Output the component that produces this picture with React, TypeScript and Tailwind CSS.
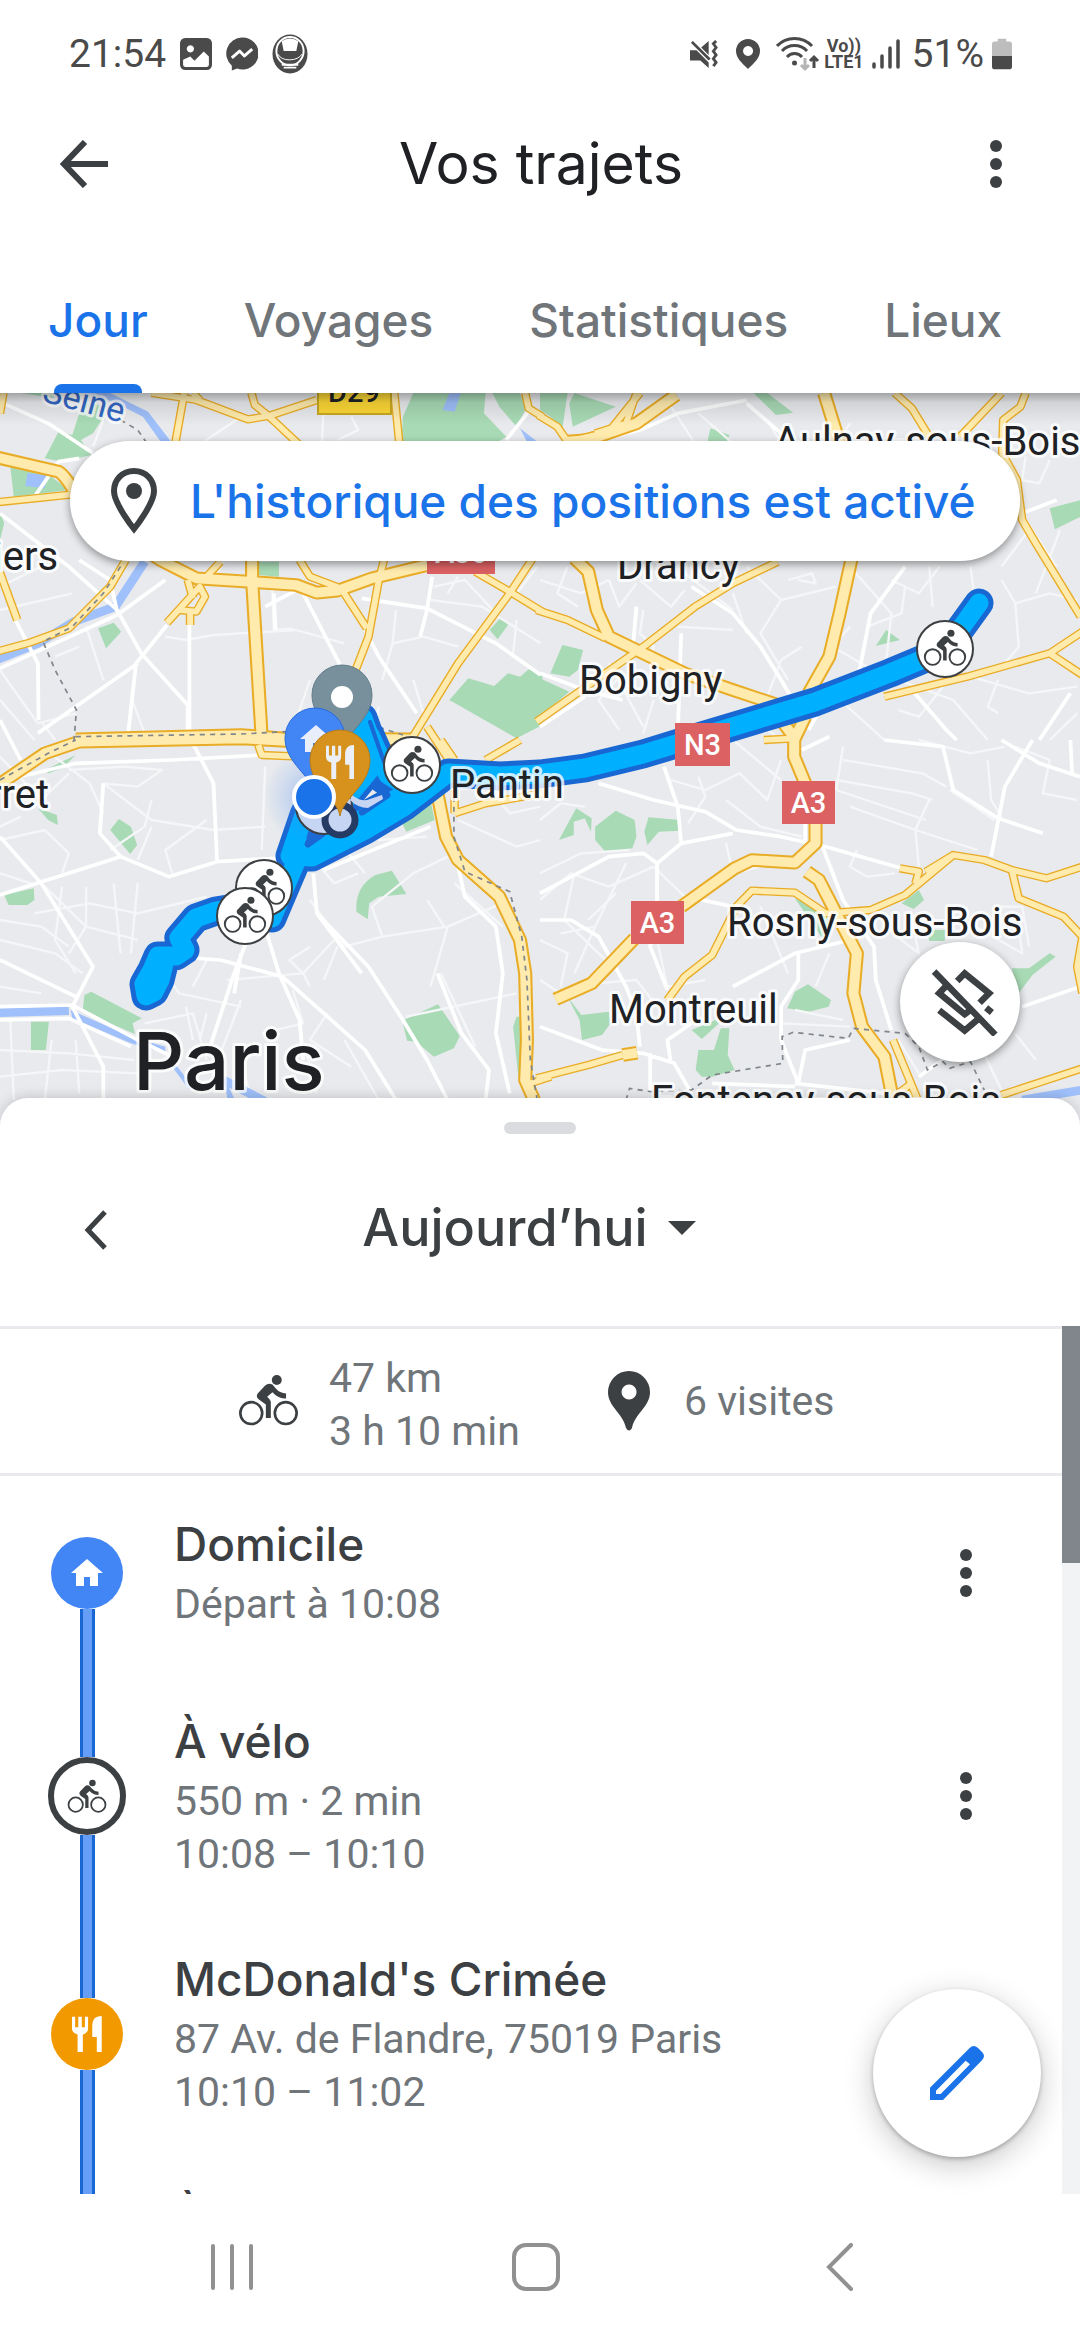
import type { ReactNode, SVGProps } from 'react';
import clsx from 'clsx';

const sans = 'font-[Inter,Roboto,sans-serif]';

interface IconProps {
  className?: string;
  x?: number;
  y?: number;
  width?: number;
  height?: number;
}

/* ---------- Icons ---------- */

function BikeIcon(props: IconProps) {
  return (
    <svg viewBox="232 132 184 160" fill="currentColor" aria-hidden="true" {...props}>
      <circle cx="272" cy="250" r="33" fill="none" stroke="currentColor" strokeWidth="8" />
      <circle cx="376" cy="250" r="33" fill="none" stroke="currentColor" strokeWidth="8" />
      <circle cx="349" cy="150" r="15" />
      <path d="M314 167Q324 157 336 164L346 176Q358 190 377 191V206Q352 206 336 187L320 201L327 208Q331 212 331 218V265H316V224L296 210Q284 201 292 190Z" />
    </svg>
  );
}

function CutleryIcon(props: IconProps) {
  return (
    <svg viewBox="0 0 85 103" fill="currentColor" aria-hidden="true" {...props}>
      <path d="M0 2h9v30h9V2h10v30h9V2h9v34q0 12-15 17v50H16V53Q0 48 0 36ZM58 30C58 10 66 0 85 0v103H71V60H58Z" />
    </svg>
  );
}

function HomeIcon(props: IconProps) {
  return (
    <svg viewBox="0 0 32 27" fill="currentColor" aria-hidden="true" {...props}>
      <path d="M0 14 16 0l16 14h-5v13h-8v-9h-6v9H5V14Z" />
    </svg>
  );
}

function MoreIcon() {
  return (
    <svg viewBox="0 0 12 48" className="h-12 w-3 fill-[#3c4043]" aria-hidden="true">
      <circle cx="6" cy="6" r="6" />
      <circle cx="6" cy="24" r="6" />
      <circle cx="6" cy="42" r="6" />
    </svg>
  );
}

/* ---------- Status bar ---------- */

function StatusBar() {
  return (
    <div className="flex h-27 items-center justify-between pr-[68px] pl-[69px] font-[Roboto,sans-serif] text-[39px] text-[#4a4a4a]">
      <div className="flex items-center gap-[14px]">
        <span>21:54</span>
        <svg viewBox="0 0 31 31" className="h-8 w-8" aria-hidden="true">
          <path
            fillRule="evenodd"
            fill="currentColor"
            d="M5 0h21a5 5 0 0 1 5 5v21a5 5 0 0 1-5 5H5a5 5 0 0 1-5-5V5a5 5 0 0 1 5-5ZM10 7a3.500 3.500 0 1 0 .1 0ZM3 21v5a2 2 0 0 0 2 2h21a2 2 0 0 0 2-2v-8l-5-5-9 9-4-4Z"
          />
        </svg>
        <svg viewBox="0 0 33 34" className="h-9 w-8" aria-hidden="true">
          <path fill="currentColor" d="M16.500 0a16.500 16.500 0 1 1-5 32L6 34v-5A16.500 16.500 0 0 1 16.500 0Z" />
          <path fill="none" stroke="#fff" strokeWidth="3" strokeLinejoin="round" d="m6 21 8-7 5 5 8-7" />
        </svg>
        <svg viewBox="0 0 37 40" className="h-10 w-9" aria-hidden="true">
          <ellipse cx="18.500" cy="20" rx="18" ry="20" fill="currentColor" />
          <ellipse cx="18.500" cy="17" rx="14" ry="14.500" fill="none" stroke="#fff" strokeWidth="2" />
          <path fill="#fff" d="M10 7l2 10h13l2-10a14 14 0 0 0-17 0ZM10 30h17v2H10ZM12 33h13v2H12Z" />
          <path fill="none" stroke="#fff" strokeWidth="1" d="M6 20q3 6 12 6t13-6" />
        </svg>
      </div>
      <div className="flex items-center">
        <svg viewBox="0 0 30 30" className="mr-4 h-7 w-8" aria-hidden="true">
          <path fill="currentColor" d="M0 11h7l13 13v6l-9-8H0Zm12-3 8-7v15Z" />
          <path fill="none" stroke="currentColor" strokeWidth="3" d="m2 2 19 19" />
          <path fill="none" stroke="currentColor" strokeWidth="3" d="m28 1-3 3 3 4-3 4 3 4-3 4 3 4-3 4" />
        </svg>
        <svg viewBox="0 0 24 30" className="mr-4 h-8 w-6" aria-hidden="true">
          <path fillRule="evenodd" fill="currentColor" d="M12 0a12 12 0 0 1 12 12c0 7-6 12-12 18C6 24 0 19 0 12A12 12 0 0 1 12 0Zm0 7a5 5 0 1 0 .1 0Z" />
        </svg>
        <svg viewBox="0 0 44 34" className="mr-1 h-9 w-11" aria-hidden="true">
          <g fill="none" stroke="currentColor" strokeWidth="3">
            <path d="M1 9a24 24 0 0 1 35 0M6 14a17 17 0 0 1 25 0M11 20a10 10 0 0 1 15 0" />
            <path d="M38 31V20m-4 4 4-4 4 4" />
            <path d="M29 21v11m-4-4 4 4 4-4" stroke="#b5b5b5" />
          </g>
          <circle cx="18.500" cy="26" r="2.500" fill="currentColor" />
        </svg>
        <span className="mr-2 flex flex-col items-center text-[18px] leading-4 font-bold">
          <span>Vo))</span>
          <span>LTE1</span>
        </span>
        <svg viewBox="0 0 28 30" className="mr-3 h-8 w-7" aria-hidden="true">
          <path fill="none" stroke="currentColor" strokeWidth="3.500" strokeLinecap="round" d="M2 25v3M10 17v11M18 9v19M26 2v26" />
        </svg>
        <span>51%</span>
        <svg viewBox="0 0 21 32" className="ml-2 h-8 w-5" aria-hidden="true">
          <path fill="#bdbdbd" d="M6 0h9v3h3a3 3 0 0 1 3 3v13H0V6a3 3 0 0 1 3-3h3Z" />
          <path fill="currentColor" d="M0 18h21v11a3 3 0 0 1-3 3H3a3 3 0 0 1-3-3Z" />
        </svg>
      </div>
    </div>
  );
}

/* ---------- Header ---------- */

function Header() {
  return (
    <header className="flex h-28 items-center justify-between pr-[78px] pl-[60px]">
      <button type="button" aria-label="Retour">
        <svg viewBox="0 0 48 48" className="h-12 w-12" aria-hidden="true">
          <path fill="none" stroke="#3c4043" strokeWidth="6" d="M48 24H4M25 2 4 24l21 22" />
        </svg>
      </button>
      <h1 className={clsx(sans, 'mr-4 ml-auto text-[57px] text-[#202124]')}>Vos trajets</h1>
      <button type="button" aria-label="Plus d'options" className="ml-auto">
        <MoreIcon />
      </button>
    </header>
  );
}

const tabs = ['Jour', 'Voyages', 'Statistiques', 'Lieux'];

function Tabs() {
  return (
    <div role="tablist" className={clsx(sans, 'flex h-[173px] overflow-hidden text-[46px] font-medium')}>
      {tabs.map((tab, i) => (
        <button
          key={tab}
          type="button"
          role="tab"
          aria-selected={i === 0}
          className={clsx(
            'flex flex-col items-center justify-between px-12 pt-[70px]',
            i === 0 ? 'text-[#1a73e8]' : 'text-[#70757a]',
          )}
        >
          <span className="leading-[60px]">{tab}</span>
          {i === 0 && <span className="h-[9px] w-[88px] rounded-t-lg bg-[#1a73e8]" />}
        </button>
      ))}
    </div>
  );
}

/* ---------- Map ---------- */

interface Tile {
  x: number;
  y: number;
  green: string;
  water?: string;
  river?: string;
  minor: string;
  street: string;
  road: string;
  highway: string;
  border?: string;
}

const tiles: Tile[] = [
  {
    x: 0,
    y: 0,
    green:
      'M130 235 170 155 210 165 240 70 320 80 270 160 235 180 265 225 180 245ZM30 260 130 275 200 330 40 350ZM60 39H160L200 60ZM1200 39H1410L1405 100 1470 170 1440 190H1165L1170 110ZM1430 39H1510L1525 90 1500 140 1450 80ZM285 745 330 728 352 755 308 805ZM750 545H810V590L750 585ZM0 395 12 430 0 480ZM1305 960 1360 895 1435 918 1475 880 1510 890 1535 868 1575 885V1035L1500 1075ZM1455 712 1475 735 1445 778 1422 750Z',
    water: 'M240 39H320L430 95 500 190H470L415 110 330 65ZM1305 39H1338L1320 95 1285 90ZM80 280 135 285 130 325 73 318ZM1510 145 1560 185H1530Z',
    river: 'M420 545 335 680 215 725 110 790-10 840',
    minor:
      'M460 480 620 530M0 620 120 560M0 690 210 640M250 740 300 900M230 800 160 830M0 870Q40 930 110 1030M110 1030 220 1000M0 960 100 1080M120 1025 160 1080M480 770 540 780 620 765 860 750 1000 790M620 600 650 545M790 620 795 750 850 745M1150 690 1140 790 1230 770 1330 800M1260 620 1350 600 1440 700M1250 660 1400 680 1570 790M1330 590 1300 640M1500 720 1490 820M380 950 420 1060M570 200 700 110 800 120M940 70 935 190M1020 110 1040 150 980 180M900 900 840 1080M1100 980 1080 1080M300 120 270 200M1560 560 1500 640M1230 1000 1200 900M1140 790 1110 900',
    street:
      'M10 70 140 130 270 220M0 400 200 560 340 690 410 820 545 975V1080M45 720 110 850 112 1020M0 865 340 705 480 600M550 730V1080M485 735 395 850 370 1080M400 850 110 1060M880 640 920 720 1000 880M1050 655 1240 685 1440 790 1570 885M1255 590 1240 690 1220 770M1060 750 1100 830 1210 1000M770 680 880 620M795 640 800 750M1470 180 1535 95M100 350 170 245 230 235M340 695 320 600 230 540',
    road: 'M-10 367 240 340M0 578 50 720M365 540 320 620 200 745 80 790-10 815M535 39 508 195M440 39 570 60 720 118 780 108 920 60M730 39 740 75 780 108 870 195M1145 39 1160 195M1525 39 1535 85 1575 110M545 600 560 655M485 728 580 620 595 650 570 695 520 690M552 690V735M600 590 640 545M870 540 900 590 990 625 1065 745M1115 540 1100 600 1070 770 1025 890M1380 575 1480 635 1575 695M1550 530 1480 640 1330 850 1190 1085M1240 1040 1310 1150M10 39 0 100M560 39 580 60',
    highway: 'M-10 232 170 275Q195 290 240 380L465 540 570 595 720 605 860 615 920 638 980 632 1080 595 1240 555M732 540V600L760 1075M220 1078 700 1065 820 1075 1200 1078',
    border: 'M350 120 400 150 440 210M350 560 300 640 210 740 125 785 160 870 222 990 215 1080M220 1070 700 1062 830 1055M1100 1042 1170 1065',
  },
  {
    x: 1568,
    y: 0,
    green:
      'M0 39H80L65 145 30 110 0 90ZM100 39 220 80 95 140 85 70ZM620 39H660L735 98 685 105ZM495 145 550 165 540 190H485ZM1480 385 1570 360V410L1495 448ZM1005 750 1045 780 975 798ZM65 795 125 810 110 870 85 890 30 880ZM0 895 85 935 0 1010Z',
    minor:
      'M380 80 450 190M460 100 560 190M660 120 700 190M900 130 860 190M0 600 120 640 200 600M80 560 50 640 110 680M200 600 230 680 280 610M290 600 380 680 420 630M560 640 600 760M600 560 700 660 640 760 720 900M700 660 860 620M720 600 790 580 800 610 750 600M900 560 1020 700 1000 900M1020 600 1100 640 1160 560M1060 620 1050 700 950 740M1130 560 1140 680M1250 560 1260 640M1340 600 1380 670 1480 640 1560 660M1380 670 1390 800 1350 850M1300 400 1410 420 1500 560M1410 230 1400 300 1450 310 1480 240M1420 450 1340 560M1510 450 1440 640M300 690 290 760 330 800 320 860M200 850 300 1040M330 960 300 1060M240 880 170 960 230 1050M610 1010 700 1080M850 940 1000 1080M900 740 850 800 950 860M400 740 560 750M1040 900 1200 960 1300 1080M1170 920 1100 1010 1040 990M1250 890 1420 940 1560 920M1330 900 1300 980 1330 1000M1560 1000 1480 1080M420 580 560 690M760 800 700 840 660 950',
    street:
      'M130 190 290 150 400 100 600 60M600 70 700 160 760 190M440 620 560 700 640 800 700 900 740 970M1060 560 960 700 930 860 910 930M0 880 130 930 240 960M280 680 270 800M410 760 400 1060M1540 940 1450 1080M1080 930 1180 1050 1210 1080M840 940 780 1050M1500 360 1400 400M0 1040 130 950',
    road: 'M-5 105 50 140 80 185M80 185 200 155 290 39M280 39 250 130 160 160M1030 39 1080 85 1130 170M1340 39 1220 170M1410 39 1395 80 1345 120 1342 220 1385 300 1400 420 1440 490 1570 710M690 545 560 610 450 680 300 800-10 1025M-10 690 80 720 190 775M1000 950 1240 890 1480 820 1575 755M1480 820 1575 885M650 1080 740 1075',
    highway: 'M395 45 280 130 140 180 80 185M825 39 870 190M100 535 140 575 165 690 200 770 330 835 420 880 560 930 720 985M905 535 870 700 840 830 780 940M700 1020 740 1075 770 1010',
  },
  {
    x: 0,
    y: 1080,
    green:
      'M130 90 220 45 180 85 140 100ZM110 205 165 225 168 255 140 240ZM345 237 380 260 398 315 378 342 320 270ZM12 465 98 445 100 480 80 495H25ZM1090 405 1138 392 1180 462 1100 470 1072 490 1068 538 1035 515Q1030 440 1090 405ZM1160 235 1250 180 1262 240 1180 275ZM245 765 265 755 412 835 385 850 392 882 240 815ZM90 845H142L133 930H90ZM1168 842 1272 793 1335 888 1318 925 1260 950 1208 905 1182 902ZM1500 830 1490 860 1505 1010 1520 1030V830Z',
    water: 'M205 810 380 890 480 920 480 940 380 910 210 835ZM500 960 560 1040 550 1050 500 980ZM650 1010 680 1075H660Z',
    river: 'M-10 818 200 812M650 1020 780 1090',
    minor:
      'M0 50 120 180 200 100M120 20 260 130 300 220M200 90 360 80 470 90 400 140 300 130M300 130 440 240 620 270 770 260M0 300 130 270 200 340 180 400M320 330 420 260 440 180M440 260 400 360M500 400 480 330 600 240M770 80 760 330M0 400 90 430M130 440 250 560 400 600M100 520 260 490 400 520 600 470M180 440 160 600 220 700M250 440 250 560 200 640M330 430 350 640M400 430 380 640M0 540 120 560 200 620M0 600 160 640 240 700M0 740 120 760M30 840 40 1080M150 900 130 1080M0 930 200 940 390 960M0 1010 180 990 400 1000M220 900 230 1060M420 850 560 820 600 960M540 800 560 900M600 820 580 900M480 700 520 760 700 800M600 660 560 740M660 720 880 700 840 660 900 620M850 750 880 850 760 880M700 780 640 940M930 380 970 430 1040 400M900 480 1000 620 1110 590M970 600 880 700 900 740M1110 590 1080 500 1200 400 1300 350M1110 590 1300 560 1480 480M1290 560 1240 480M1300 560 1250 740M1320 430 1460 560M1180 830 1500 760M980 620 940 720M1280 700 1380 920M1040 240 1100 300 1240 290M980 300 1060 400M890 940 920 1060M700 960 730 1080M950 820 900 900 1020 980M1000 900 1100 1080M60 230 0 260M1380 100 1480 220 1568 200M1330 240 1500 320 1568 300',
    street:
      'M0 -60 60 60M0 290 120 430 270 680 210 800 300 980 300 1080M0 465 350 350 490 410 630 365 800 355M0 120 100 100 220 70 500 60 850 40M0 660 220 770M0 800 210 795 400 900 520 960M0 840 200 835 380 920M500 650 640 660 820 710M740 540 680 700 610 920M760 530 810 700 870 840 880 960M820 710 1060 930 1150 1080M910 400 920 520 1070 680 1170 840 1240 960 1300 1080M920 520 1050 700M1270 700 1340 880 1420 990 1410 1080M940 390 1250 260M1330 380 1350 470 1440 560 1460 700 1440 880 1480 1060M560 10 620 130 630 360M300 130 290 280 350 350M700 640 680 760',
    road: 'M750 15 760 45 870 50M1320 220 1410 190 1575 160M1320 150V220M1280 0 1320 60M1410 60 1510 0M1540 1030 1600 1010',
    highway:
      'M-5 135 130 40 230 5 700-5 870 5M1268 150 1295 290 1330 360 1450 470 1510 600 1525 700 1530 900 1525 1020 1555 1090',
    border: 'M0 120 140 40 220 0M1318 80V290L1350 395 1480 455 1515 590 1530 720 1540 960 1560 1080',
  },
  {
    x: 1568,
    y: 1080,
    green:
      'M105 205 150 235 148 275 130 235 98 245V285L55 300ZM220 212 275 240 280 290 268 325 190 335 160 300 160 260ZM315 232 405 240V272L345 275 312 315 303 275ZM740 475 830 520 850 560 830 610 770 520ZM1100 450 1115 480 1085 507 1050 490ZM1125 570H1178L1175 603H1130ZM740 755 778 733 845 780 838 800 780 815 718 805ZM1370 685 1420 685 1480 640 1497 650 1430 705 1390 760ZM80 770 120 825 200 815 205 850 180 885 122 900 115 840ZM440 870 510 840 520 850 470 897ZM525 865H550L545 945 565 990 500 1010 470 1010 452 990 460 930H505Z',
    river: 'M1400 1080 1575 1050',
    minor:
      'M380 120 480 150 580 100 660 180 700 60M540 180 640 260 760 290M560 0 700 120M880 60 1110 100 1180 140M860 120 1080 160 1140 180M880 20 860 150M860 150 1120 240M1100 0 1250 40 1350 20M1300 60 1310 180 1340 230M1190 150 1320 240M1130 180 1090 270 1100 380M900 200 1090 270 1270 330M920 330 900 380 950 410 1030 400M0 400 120 340 260 330M0 480 90 400 200 440 330 380M100 400 70 540 150 620 210 680M0 600 80 640 60 740M250 370 160 560 100 700M330 380 420 470 560 500M430 250 480 170 460 110M540 310 560 400 490 430M560 400 640 380M640 500 720 700M340 600 370 740 480 720M1000 560 1100 640 1080 540M1230 540 1400 640 1390 560M0 720 60 760M0 240 60 190 130 200M1340 500 1400 500 1420 620M340 800 280 720 160 730M840 640 800 740M700 850 900 860M740 810 880 840M1270 900 1340 1050M1380 880 1440 960M1040 900 1100 1000M60 580 160 560M1380 20 1480 60 1460 160 1560 180M220 460 140 540',
    street:
      'M170 130 330 180 480 215 570 270 700 290 830 320 1050 385M0 460 200 350 300 340 340 370 410 310 560 280M360 80 400 200 410 310M340 370V480L320 620 370 750M0 540 90 540 170 590 250 740 280 820 290 920M0 860 180 930 300 940 390 970 440 1060M320 940V1060M470 480 560 500M820 320 880 480 970 620 975 720 1020 870M750 640V720L700 800 700 900 750 1030 770 930 900 900M560 740 740 640 900 600M380 970 370 900 440 850M1000 0 1170 20 1200 150 1330 235 1460 280M1430 0 1350 140 1310 350M1340 0 1450 70 1568 110M1540 0 1545 100M740 1030 1000 1060M1400 800 1568 740M1100 1010 1180 950M760 30 840 -10M770 250 770 300M500 1030 740 1040',
    road: 'M370 780 420 710 500 645 570 500 615 452 740 458 830 520 960 510 1060 465 1200 345 1290 360 1370 390 1470 415 1575 380M1045 385 1100 395 1090 430M1200 345 1120 395M1370 390 1390 475 1520 530 1575 590M1575 590 1560 680 1575 760M-10 1015 140 975 240 945M1025 900 1095 1075M1340 1065 1575 985M1040 1060 1080 1030',
    highway: 'M738-10V50L770 130M800 250V310L740 368 615 360 565 385 410 500M275 595 150 730 45 778M775 395 810 420 860 520 920 640 910 760 935 860 1000 950 1025 1080M240 945 282 938',
    border: 'M250 1080 260 1045 320 1055 440 1050 500 1005 705 970 703 890 735 877 895 895 910 865 1060 880 1100 920 1125 990 1170 965 1190 985 1250 965 1290 1050',
  },
];

// A tile is 1568 units wide, two of them side by side span the map.
const tileScale = 'translate(0 380) scale(.34439 .33333)';

function TileLayer({ layer, ...paint }: { layer: keyof Omit<Tile, 'x' | 'y'> } & SVGProps<SVGGElement>) {
  return (
    <g transform={tileScale} fill="none" {...paint}>
      {tiles.map((tile) => (
        <path key={`${tile.x}-${tile.y}`} transform={`translate(${tile.x} ${tile.y})`} d={tile[layer]} />
      ))}
    </g>
  );
}

const route =
  'M979 603 945 650 890 673 815 702 702 736 643 754 585 768 540 774 500 776 448 773 405 806 365 830 312 857 290 856 304 815 330 760 363 718 378 760 345 800M370 735 388 775 412 790 372 812 330 842 298 850M298 857 286 885 272 918M246 906 216 911 196 918 179 938 185 950 176 956 158 956 152 970 144 984 146 996 154 992 160 980 164 964';

const places = [
  { name: 'Aulnay-sous-Bois', x: 774, y: 455 },
  { name: 'Drancy', x: 617, y: 579 },
  { name: 'Bobigny', x: 579, y: 694 },
  { name: 'Pantin', x: 450, y: 798 },
  { name: 'Rosny-sous-Bois', x: 727, y: 936 },
  { name: 'Montreuil', x: 609, y: 1023 },
  { name: 'Fontenay-sous-Bois', x: 651, y: 1114 },
  { name: 'iers', x: -7, y: 570 },
  { name: 'rret', x: -12, y: 808 },
];

const shields = [
  { name: 'A86', x: 427, y: 531, width: 68 },
  { name: 'N3', x: 675, y: 723, width: 55 },
  { name: 'A3', x: 782, y: 781, width: 53 },
  { name: 'A3', x: 631, y: 901, width: 53 },
];

const pinShape = 'M0 56C-3 38-30 25-30 0A30 30 0 1 1 30 0C30 25 3 38 0 56Z';

function BikeMarker({ x, y }: { x: number; y: number }) {
  return (
    <g transform={`translate(${x} ${y})`} className="text-[#3c4043]">
      <circle r="28" fill="#fff" stroke="#3c4043" strokeWidth="2" />
      <BikeIcon x={-22} y={-20} width={44} height={38} />
    </g>
  );
}

function TripMap() {
  return (
    <svg viewBox="0 393 1080 735" className="block w-full bg-[#e8eaed]" role="img" aria-label="Carte du trajet">
      <defs>
        <linearGradient id="topShade" x1="0" x2="0" y1="0" y2="1">
          <stop offset="0" stopColor="#000" stopOpacity=".3" />
          <stop offset=".3" stopColor="#000" stopOpacity=".1" />
          <stop offset="1" stopColor="#000" stopOpacity="0" />
        </linearGradient>
        <radialGradient id="locationGlow">
          <stop offset="0" stopColor="#4285f4" stopOpacity=".4" />
          <stop offset="1" stopColor="#4285f4" stopOpacity="0" />
        </radialGradient>
      </defs>

      <TileLayer layer="green" style={{ fill: '#a8dab5' }} />
      <TileLayer layer="minor" stroke="#f5f6f7" strokeWidth={7} strokeLinejoin="round" />
      <TileLayer layer="water" style={{ fill: '#9fc0fb' }} />
      <TileLayer layer="river" stroke="#9fc0fb" strokeWidth={26} />
      <TileLayer layer="street" stroke="#fff" strokeWidth={11} strokeLinejoin="round" />
      <TileLayer layer="road" stroke="#e9ac27" strokeWidth={25} strokeLinejoin="round" />
      <TileLayer layer="highway" stroke="#e9ac27" strokeWidth={41} strokeLinejoin="round" />
      <TileLayer layer="road" stroke="#ffebad" strokeWidth={17} strokeLinejoin="round" />
      <TileLayer layer="highway" stroke="#ffebad" strokeWidth={29} strokeLinejoin="round" />
      <TileLayer layer="border" stroke="#80868b" strokeWidth={5} strokeDasharray="15 15" />

      <g fill="none" strokeLinecap="round" strokeLinejoin="round">
        <path d={route} stroke="#1967d2" strokeWidth="29" />
        <path d={route} stroke="#00b0ff" strokeWidth="19" />
        <path d="m362 812 25-17-12-8" stroke="#1967d2" strokeWidth="7" />
        <path d="m308 844 6-12 8 2Z" stroke="#1967d2" strokeWidth="7" />
        <path d="m370 722 14 40" stroke="#1967d2" strokeWidth="4" />
      </g>

      {/* Place names */}
      <g
        className="font-[Roboto,sans-serif] text-[40px]"
        fill="#202124"
        stroke="#fff"
        strokeOpacity=".8"
        strokeWidth="6"
        strokeLinejoin="round"
        paintOrder="stroke"
      >
        {places.map(({ name, x, y }) => (
          <text key={name} x={x} y={y}>
            {name}
          </text>
        ))}
        <text x="133" y="1090" className="font-[Inter,sans-serif] text-[80px] font-medium">
          Paris
        </text>
        <text transform="translate(41 401) rotate(15)" fill="#3367c4" className="text-[34px]">
          Seine
        </text>
      </g>

      {/* Road numbers */}
      <g className="font-[Roboto,sans-serif] text-[29px] font-medium" textAnchor="middle">
        <rect x="318" y="371" width="73" height="43" fill="#fdd835" stroke="#c9a821" strokeWidth="2" />
        <text x="354" y="402" fill="#202124">
          D29
        </text>
        {shields.map(({ name, x, y, width }) => (
          <g key={`${name}-${x}`}>
            <rect x={x} y={y} width={width} height="43" fill="#db6163" />
            <text x={x + width / 2} y={y + 32} fill="#fff">
              {name}
            </text>
          </g>
        ))}
      </g>

      {/* Markers */}
      <BikeMarker x={945} y={649} />
      <BikeMarker x={412} y={765} />
      <g transform="translate(342 695)">
        <path d={pinShape} fill="#78909c" stroke="#617d8a" />
        <circle cy="2" r="11" fill="#fff" />
      </g>
      <circle cx="314" cy="797" r="50" fill="url(#locationGlow)" />
      <circle cx="324" cy="806" r="28" fill="#c7d5f4" stroke="#3c4043" strokeWidth="2" />
      <path d="m352 795q10 8 18 4l12-4 1 4-15 9q-10 0-18-8Z" fill="#c7d5f4" />
      <circle cx="340" cy="820" r="15" fill="#c7d5f4" stroke="#263b63" strokeWidth="7" />
      <g transform="translate(315 738)">
        <path d={pinShape} fill="#4285f4" stroke="#2a6bdb" />
        <HomeIcon x={-15} y={-13} width={32} height={27} className="text-[#e8eefc]" />
      </g>
      <g transform="translate(340 760)">
        <path d={pinShape} fill="#d6921d" stroke="#b97d1a" />
        <CutleryIcon x={-14} y={-15} width={28} height={34} className="text-[#eceff6]" />
      </g>
      <circle cx="314" cy="797" r="20" fill="#1a73e8" stroke="#fff" strokeWidth="4" />
      <BikeMarker x={264} y={888} />
      <BikeMarker x={245} y={916} />

      <rect y="393" width="1080" height="32" fill="url(#topShade)" />
    </svg>
  );
}

function MapSection() {
  return (
    <section className="relative">
      <TripMap />
      <button
        type="button"
        className={clsx(
          sans,
          'absolute top-12 right-15 left-[70px] flex h-30 items-center rounded-full bg-white pl-10 text-left text-[46px] font-medium whitespace-nowrap text-[#1a73e8] shadow-[0_3px_8px_rgba(0,0,0,0.4)]',
        )}
      >
        <svg viewBox="0 0 46 66" className="mr-8 h-[66px] w-12 shrink-0" aria-hidden="true">
          <path fill="none" stroke="#3c4043" strokeWidth="6" d="M23 3C11 3 3 12 3 23c0 13 20 38 20 38s20-25 20-38C43 12 35 3 23 3Z" />
          <circle cx="23" cy="23" r="8" fill="#3c4043" />
        </svg>
        L'historique des positions est activé
      </button>
      <button
        type="button"
        aria-label="Masquer les calques"
        className="absolute right-15 bottom-[66px] flex size-30 items-center justify-center rounded-full bg-white pl-2 shadow-[0_3px_8px_rgba(0,0,0,0.4)]"
      >
        <svg viewBox="0 0 200 200" className="size-17" aria-hidden="true">
          <g fill="none" stroke="#3c4043" strokeWidth="19">
            <path d="M80 38 102 16 174 74 146 102M48 52 27 74 102 136 126 118M27 124 102 184 142 150M165 117 182 131" />
            <path d="M12 10 192 196" />
          </g>
        </svg>
      </button>
    </section>
  );
}

/* ---------- Timeline ---------- */

interface Stop {
  title: string;
  lines: string[];
  kind: 'home' | 'bike' | 'food';
  menu?: boolean;
}

const stops: Stop[] = [
  { title: 'Domicile', lines: ['Départ à 10:08'], kind: 'home', menu: true },
  { title: 'À vélo', lines: ['550 m · 2 min', '10:08 – 10:10'], kind: 'bike', menu: true },
  { title: "McDonald's Crimée", lines: ['87 Av. de Flandre, 75019 Paris', '10:10 – 11:02'], kind: 'food' },
  { title: 'À vélo', lines: ['2,1 km · 9 min', '11:02 – 11:11'], kind: 'bike' },
];

const dots: Record<Stop['kind'], ReactNode> = {
  home: (
    <span className="flex size-18 items-center justify-center rounded-full bg-[#4285f4] text-white">
      <HomeIcon className="w-8" />
    </span>
  ),
  bike: (
    <span className="flex size-[78px] items-center justify-center rounded-full border-6 border-[#3c4043] bg-white text-[#3c4043]">
      <BikeIcon className="w-10" />
    </span>
  ),
  food: (
    <span className="flex size-18 items-center justify-center rounded-full bg-[#f29900] text-white">
      <CutleryIcon className="h-9" />
    </span>
  ),
};

function TimelineRow({ stop, first }: { stop: Stop; first: boolean }) {
  const segment = 'w-[15px] flex-1';
  const line = 'border-x-3 border-[#1967d2] bg-[#669df6]';

  return (
    <li className="flex shrink-0 pl-12">
      <div className="flex w-[78px] flex-col items-center">
        <span className={clsx(segment, !first && line)} />
        {dots[stop.kind]}
        <span className={clsx(segment, line)} />
      </div>
      <div
        className={clsx(
          'ml-12 flex flex-1 flex-col justify-center',
          stop.kind === 'bike' ? 'py-[42px]' : 'min-h-[193px] py-[26px]',
        )}
      >
        <h3 className={clsx(sans, 'mb-1 text-[46px] leading-[60px] font-medium text-[#3c4043]')}>{stop.title}</h3>
        {stop.lines.map((text) => (
          <p key={text} className="font-[Roboto,sans-serif] text-[41px] leading-[53px] text-[#70757a]">
            {text}
          </p>
        ))}
      </div>
      {stop.menu && (
        <button type="button" aria-label={`Options pour ${stop.title}`} className="mr-[90px] self-center">
          <MoreIcon />
        </button>
      )}
    </li>
  );
}

function Summary() {
  return (
    <div className="flex h-[150px] shrink-0 items-center border-y-3 border-[#e8eaed] pl-[238px] font-[Roboto,sans-serif] text-[41px] leading-[53px] text-[#70757a]">
      <BikeIcon className="mr-[30px] w-[61px] text-[#3c4043]" />
      <p className="w-[279px] pt-2">
        47 km
        <br />3 h 10 min
      </p>
      <svg viewBox="0 0 42 60" className="mr-[34px] h-15 w-[42px]" aria-hidden="true">
        <path
          fill="#3c4043"
          fillRule="evenodd"
          d="M21 0a21 21 0 0 1 21 21C42 36 27 42 24 57q-3 5-6 0C15 42 0 36 0 21A21 21 0 0 1 21 0Zm0 13.500a7.500 7.500 0 1 0 .1 0Z"
        />
      </svg>
      <p>6 visites</p>
    </div>
  );
}

function TimelineSheet() {
  return (
    <main className="relative -mt-[30px] flex min-h-0 flex-1 flex-col rounded-t-[28px] bg-white shadow-[0_-2px_12px_rgba(0,0,0,0.15)]">
      <span className="mx-auto mt-6 h-3 w-18 shrink-0 rounded-full bg-[#dadce0]" />
      <div className="flex h-48 shrink-0 items-center pl-[84px]">
        <button type="button" aria-label="Jour précédent">
          <svg viewBox="0 0 24 40" className="h-10 w-6" aria-hidden="true">
            <path fill="none" stroke="#3c4043" strokeWidth="5" d="M21 2 4 20l17 18" />
          </svg>
        </button>
        <button
          type="button"
          className={clsx(sans, 'mx-auto flex items-center gap-5 pr-[130px] pb-1 text-[52px] font-medium text-[#3c4043]')}
        >
          Aujourd’hui
          <svg viewBox="0 0 28 14" className="h-[14px] w-7 fill-[#3c4043]" aria-hidden="true">
            <path d="M0 0h28L14 14Z" />
          </svg>
        </button>
      </div>

      <div className="flex min-h-0 flex-1">
        <div className="flex flex-1 flex-col overflow-hidden">
          <Summary />
          <ol className="flex flex-1 flex-col overflow-hidden">
            {stops.map((stop, i) => (
              <TimelineRow key={i} stop={stop} first={i === 0} />
            ))}
          </ol>
        </div>
        <div className="w-[18px] bg-[#f1f3f4]">
          <div className="h-[237px] bg-[#80868b]" />
        </div>
      </div>

      <button
        type="button"
        aria-label="Modifier"
        className="absolute right-[39px] bottom-[37px] flex size-42 items-center justify-center rounded-full bg-white shadow-[0_2px_4px_rgba(0,0,0,0.25),0_8px_30px_rgba(0,0,0,0.22)]"
      >
        <svg viewBox="330 318 162 162" className="size-[54px] fill-[#1a73e8]" aria-hidden="true">
          <path
            fillRule="evenodd"
            d="M330 443 449 324Q461 312 474 324L486 336Q498 348 486 361L369 480H330ZM348 452V462H362L450 373 437 362Z"
          />
        </svg>
      </button>
    </main>
  );
}

/* ---------- System navigation ---------- */

function SystemNav() {
  return (
    <nav className="relative flex h-[146px] shrink-0 items-center bg-white pr-22 pl-20">
      <button type="button" aria-label="Applications récentes" className="flex flex-1 justify-center">
        <svg viewBox="0 0 44 46" className="h-[46px] w-11" aria-hidden="true">
          <path fill="none" stroke="#919191" strokeWidth="4" strokeLinecap="round" d="M3 2v42M22 2v42M41 2v42" />
        </svg>
      </button>
      <button type="button" aria-label="Accueil" className="flex flex-1 justify-center">
        <span className="size-12 rounded-[14px] border-4 border-[#919191]" />
      </button>
      <button type="button" aria-label="Retour système" className="flex flex-1 justify-center">
        <svg viewBox="0 0 28 48" className="h-12 w-7" aria-hidden="true">
          <path fill="none" stroke="#919191" strokeWidth="4" strokeLinecap="round" d="M25 2 3 24l22 22" />
        </svg>
      </button>
    </nav>
  );
}

export default function App() {
  return (
    <div className="flex h-screen flex-col overflow-hidden bg-white">
      <StatusBar />
      <Header />
      <Tabs />
      <MapSection />
      <TimelineSheet />
      <SystemNav />
    </div>
  );
}
